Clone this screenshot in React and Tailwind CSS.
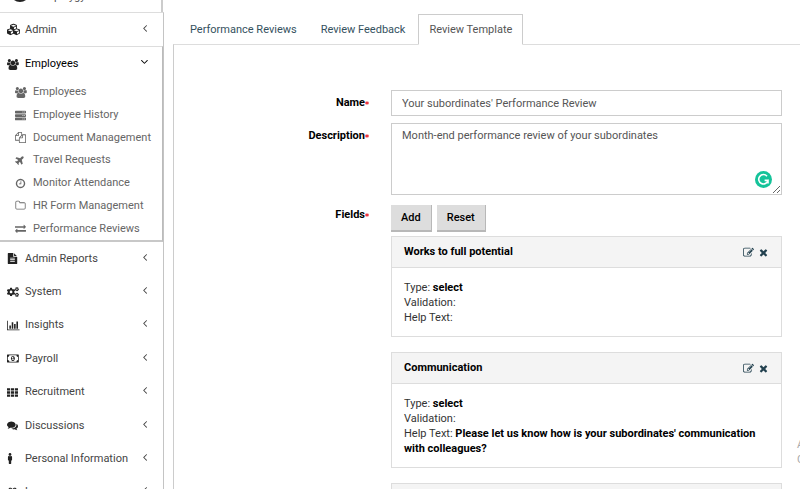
import { useState } from 'react'
import { FaAsterisk, FaCubes, FaServer, FaPlane, FaCogs, FaMale, FaGift } from 'react-icons/fa'

const paths = {
  users: [1920, 'M593 896q-162 5-265 128h-134q-82 0-138-40.5t-56-118.5q0-353 124-353 6 0 43.5 21t97.5 42.5 119 21.5q67 0 133-23-5 37-5 66 0 159 93 287zm1071 637q0 120-73 189.5t-194 69.5h-874q-121 0-194-69.5t-73-189.5q0-53 3.5-103.5t14-109 26.5-108.5 43-97.5 62-81 85.5-53.5 111.5-20q10 0 43 21.5t73 48 107 48 135 21.5 135-21.5 107-48 73-48 43-21.5q61 0 111.5 20t85.5 53.5 62 81 43 97.5 26.5 108.5 14 109 3.5 103.5zm-1024-1277q0 106-75 181t-181 75-181-75-75-181 75-181 181-75 181 75 75 181zm704 384q0 159-112.5 271.5t-271.5 112.5-271.5-112.5-112.5-271.5 112.5-271.5 271.5-112.5 271.5 112.5 112.5 271.5zm576 225q0 78-56 118.5t-138 40.5h-134q-103-123-265-128 93-128 93-287 0-29-5-66 66 23 133 23 59 0 119-21.5t97.5-42.5 43.5-21q124 0 124 353zm-128-609q0 106-75 181t-181 75-181-75-75-181 75-181 181-75 181 75 75 181z'],
  files: [1792, 'M1696 384q40 0 68 28t28 68v1216q0 40-28 68t-68 28h-960q-40 0-68-28t-28-68v-288h-544q-40 0-68-28t-28-68v-672q0-40 20-88t48-76l408-408q28-28 76-48t88-20h416q40 0 68 28t28 68v328q68-40 128-40h416zm-544 213l-299 299h299v-299zm-640-384l-299 299h299v-299zm196 647l316-316v-416h-384v416q0 40-28 68t-68 28h-416v640h512v-256q0-40 20-88t48-76zm956 804v-1152h-384v416q0 40-28 68t-68 28h-416v640h896z'],
  clock: [1792, 'M1024 544v448q0 14-9 23t-23 9h-320q-14 0-23-9t-9-23v-64q0-14 9-23t23-9h224v-352q0-14 9-23t23-9h64q14 0 23 9t9 23zm416 352q0-148-73-273t-198-198-273-73-273 73-198 198-73 273 73 273 198 198 273 73 273-73 198-198 73-273zm224 0q0 209-103 385.5t-279.5 279.5-385.5 103-385.5-103-279.5-279.5-103-385.5 103-385.5 279.5-279.5 385.5-103 385.5 103 279.5 279.5 103 385.5z'],
  folder: [1792, 'M1600 1312v-704q0-40-28-68t-68-28h-704q-40 0-68-28t-28-68v-64q0-40-28-68t-68-28h-320q-40 0-68 28t-28 68v960q0 40 28 68t68 28h1216q40 0 68-28t28-68zm128-704v704q0 92-66 158t-158 66h-1216q-92 0-158-66t-66-158v-960q0-92 66-158t158-66h320q92 0 158 66t66 158v32h672q92 0 158 66t66 158z'],
  exchange: [1792, 'M1792 1184v192q0 13-9.5 22.5t-22.5 9.5h-1376v192q0 13-9.5 22.5t-22.5 9.5q-12 0-24-10l-319-320q-9-9-9-22 0-14 9-23l320-320q9-9 23-9 13 0 22.5 9.5t9.5 22.5v192h1376q13 0 22.5 9.5t9.5 22.5zm0-544q0 14-9 23l-320 320q-9 9-23 9-13 0-22.5-9.5t-9.5-22.5v-192h-1376q-13 0-22.5-9.5t-9.5-22.5v-192q0-13 9.5-22.5t22.5-9.5h1376v-192q0-14 9-23t23-9q12 0 24 10l319 319q9 9 9 23z'],
  report: [1792, 'M1596 476q14 14 28 36h-472v-472q22 14 36 28zm-476 164h544v1056q0 40-28 68t-68 28h-1344q-40 0-68-28t-28-68v-1600q0-40 28-68t68-28h800v544q0 40 28 68t68 28zm160 736v-64q0-14-9-23t-23-9h-704q-14 0-23 9t-9 23v64q0 14 9 23t23 9h704q14 0 23-9t9-23zm0-256v-64q0-14-9-23t-23-9h-704q-14 0-23 9t-9 23v64q0 14 9 23t23 9h704q14 0 23-9t9-23zm0-256v-64q0-14-9-23t-23-9h-704q-14 0-23 9t-9 23v64q0 14 9 23t23 9h704q14 0 23-9t9-23z'],
  chart: [2048, 'M640 896v512h-256v-512h256zm384-512v1024h-256v-1024h256zm1024 1152v128h-2048v-1536h128v1408h1920zm-640-896v768h-256v-768h256zm384-384v1152h-256v-1152h256z'],
  money: [1920, 'M768 1152h384v-96h-128v-448h-114l-148 137 77 80q42-37 55-57h2v288h-128v96zm512-256q0 70-21 142t-59.5 134-101.5 101-138 39-138-39-101.5-101-59.5-134-21-142 21-142 59.5-134 101.5-101 138-39 138 39 101.5 101 59.5 134 21 142zm512 256v-512q-106 0-181-75t-75-181h-1152q0 106-75 181t-181 75v512q106 0 181 75t75 181h1152q0-106 75-181t181-75zm128-832v1152q0 26-19 45t-45 19h-1792q-26 0-45-19t-19-45v-1152q0-26 19-45t45-19h1792q26 0 45 19t19 45z'],
  grid: [1792, 'M0 192h512v384h-512zM640 192h512v384h-512zM1280 192h512v384h-512zM0 704h512v384h-512zM640 704h512v384h-512zM1280 704h512v384h-512zM0 1216h512v384h-512zM640 1216h512v384h-512zM1280 1216h512v384h-512z'],
  comments: [1792, 'M1408 768q0 139-94 257t-256.5 186.5-353.5 68.5q-86 0-176-16-124 88-278 128-36 9-86 16h-3q-11 0-20.5-8t-11.5-21q-1-3-1-6.5t.5-6.5 2-6l2.5-5 3.5-5.5 4-5 4.5-5 4-4.5q5-6 23-25t26-29.5 22.5-29 25-38.5 20.5-44q-124-72-195-177t-71-224q0-139 94-257t256.5-186.5 353.5-68.5 353.5 68.5 256.5 186.5 94 257zm384 256q0 120-71 224.5t-195 176.5q10 24 20.5 44t25 38.5 22.5 29 26 29.5 23 25q1 1 4 4.5t4.5 5 4 5 3.5 5.5l2.5 5 2 6 .5 6.5-1 6.5q-3 14-13 22t-22 7q-50-7-86-16-154-40-278-128-90 16-176 16-271 0-472-132 58 4 88 4 161 0 309-45t264-129q125-92 192-212t67-254q0-77-23-152 129 71 204 178t75 230z'],
  edit: [1792, 'M888 1184l116-116-152-152-116 116v56h96v96h56zm440-720q-16-16-33 1l-350 350q-17 17-1 33t33-1l350-350q17-17 1-33zm80 594v190q0 119-84.5 203.5t-203.5 84.5h-832q-119 0-203.5-84.5t-84.5-203.5v-832q0-119 84.5-203.5t203.5-84.5h832q63 0 117 25 15 7 18 23 3 17-9 29l-49 49q-14 14-32 8-23-6-45-6h-832q-66 0-113 47t-47 113v832q0 66 47 113t113 47h832q66 0 113-47t47-113v-126q0-13 9-22l64-64q15-15 35-7t20 29zm-96-738l288 288-672 672h-288v-288zm444 132l-92 92-288-288 92-92q28-28 68-28t68 28l152 152q28 28 28 68t-28 68z'],
  times: [1792, 'M1490 1322q0 40-28 68l-136 136q-28 28-68 28t-68-28l-294-294-294 294q-28 28-68 28t-68-28l-136-136q-28-28-28-68t28-68l294-294-294-294q-28-28-28-68t28-68l136-136q28-28 68-28t68 28l294 294 294-294q28-28 68-28t68 28l136 136q28 28 28 68t-28 68l-294 294 294 294q28 28 28 68z'],
  angle: [1792, 'M1203 544q0 13-10 23l-393 393 393 393q10 10 10 23t-10 23l-50 50q-10 10-23 10t-23-10l-466-466q-10-10-10-23t10-23l466-466q10-10 23-10t23 10l50 50q10 10 10 23z']
}

function Icon({ name, className = 'h-3' }) {
  const [width, d] = paths[name]
  return (
    <svg viewBox={`0 0 ${width} 1792`} fill="currentColor" className={className} aria-hidden="true">
      <path d={d} />
    </svg>
  )
}

const employeeLinks = [
  { label: 'Employees', icon: <Icon name="users" className="h-[11px]" /> },
  { label: 'Employee History', icon: <FaServer className="size-[11px]" /> },
  { label: 'Document Management', icon: <Icon name="files" className="h-[11px]" /> },
  { label: 'Travel Requests', icon: <FaPlane className="size-[10px] -rotate-45" /> },
  { label: 'Monitor Attendance', icon: <Icon name="clock" className="h-[11px]" /> },
  { label: 'HR Form Management', icon: <Icon name="folder" className="h-[11px]" /> },
  { label: 'Performance Reviews', icon: <Icon name="exchange" className="h-[11px]" /> }
]

const sections = [
  { label: 'Admin Reports', icon: <Icon name="report" className="h-[11px]" /> },
  { label: 'System', icon: <FaCogs className="size-3" /> },
  { label: 'Insights', icon: <Icon name="chart" className="h-[11px]" /> },
  { label: 'Payroll', icon: <Icon name="money" className="h-[11px]" /> },
  { label: 'Recruitment', icon: <Icon name="grid" className="h-[11px]" /> },
  { label: 'Discussions', icon: <Icon name="comments" className="h-[11px]" /> },
  { label: 'Personal Information', icon: <FaMale className="h-[11px] w-[6px]" /> },
  { label: 'Leave', icon: <FaGift className="size-[11px]" /> }
]

const tabs = ['Performance Reviews', 'Review Feedback', 'Review Template']

const fields = [
  { title: 'Works to full potential', type: 'select', help: '' },
  {
    title: 'Communication',
    type: 'select',
    help: "Please let us know how is your subordinates' communication with colleagues?"
  }
]

function SectionButton({ label, icon, open, onClick }) {
  return (
    <button
      type="button"
      onClick={onClick}
      className={`flex h-full min-h-[33px] w-full items-center pl-[7px] pr-3 text-left ${open ? 'text-black' : 'text-[#444]'}`}
    >
      <span className="flex w-[18px] shrink-0 text-[#222]">{icon}</span>
      <span className="flex-1 whitespace-nowrap">{label}</span>
      <Icon name="angle" className={`mb-1 h-3 ${open ? '-rotate-90' : ''}`} />
    </button>
  )
}

function Sidebar() {
  const [open, setOpen] = useState(true)

  return (
    <aside className="w-[164px] shrink-0">
      <div className="mr-px flex h-3 items-end gap-2 overflow-hidden border-r-2 border-[#ccc] pl-[10px]">
        <span className="mb-[10px] size-5 shrink-0 rounded-full bg-[#222]" />
        <span className="mb-[7px] text-[#555]">Employgy</span>
      </div>
      <nav className="border-r border-t border-r-[#c4c4c4] border-t-[#ddd]">
        <SectionButton label="Admin" icon={<FaCubes className="size-[13px]" />} />
        <div className="border-b-2 border-r border-t border-b-[#c8c8c8] border-r-[#bbb] border-t-[#ddd]">
          <div className="h-[34px]">
            <SectionButton
              label="Employees"
              icon={<Icon name="users" className="h-[11px]" />}
              open={open}
              onClick={() => setOpen(!open)}
            />
          </div>
          {open && (
            <ul className="grid h-[159px] auto-rows-fr">
              {employeeLinks.map(link => (
                <li key={link.label} className="flex">
                  <a href="#" className="flex flex-1 items-center whitespace-nowrap pl-[15px] text-[#666]">
                    <span className="flex w-[18px] shrink-0">{link.icon}</span>
                    {link.label}
                  </a>
                </li>
              ))}
            </ul>
          )}
        </div>
        <ul className="grid h-[267px] auto-rows-fr">
          {sections.map(section => (
            <li key={section.label}>
              <SectionButton {...section} />
            </li>
          ))}
        </ul>
      </nav>
    </aside>
  )
}

function FormRow({ label, htmlFor, children }) {
  return (
    <div className="flex gap-[22px]">
      <label htmlFor={htmlFor} className="flex h-[26px] w-[195px] shrink-0 items-center justify-end font-bold text-black">
        {label}
        <FaAsterisk className="size-1 text-red-600" />
      </label>
      <div className="min-w-0 flex-1">{children}</div>
    </div>
  )
}

function FieldCard({ title, children }) {
  return (
    <section className="border border-[#ddd]">
      <header className="flex h-[31px] items-center gap-1 border-b border-[#ddd] bg-[#f4f4f4] px-3">
        <h3 className="flex-1 font-bold text-black">{title}</h3>
        <button type="button" aria-label="Edit" className="text-[#23414f]">
          <Icon name="edit" className="h-[11px]" />
        </button>
        <button type="button" aria-label="Remove" className="text-[#23414f]">
          <Icon name="times" className="h-[11px]" />
        </button>
      </header>
      <div className="px-3 pb-[11px] pt-3 leading-[15px] text-[#333]">{children}</div>
    </section>
  )
}

function ReviewForm() {
  return (
    <form className="flex flex-col gap-[7px] pr-[18px] pt-[45px]">
      <FormRow label="Name" htmlFor="name">
        <input
          id="name"
          defaultValue="Your subordinates' Performance Review"
          className="block h-[26px] w-full border border-[#ccc] px-[10px] text-[#555]"
        />
      </FormRow>
      <FormRow label="Description" htmlFor="description">
        <div className="relative">
          <textarea
            id="description"
            defaultValue="Month-end performance review of your subordinates"
            className="block h-[72px] w-full resize border border-[#ccc] px-[10px] py-1 leading-4 text-[#555]"
          />
          <svg viewBox="0 0 17 17" className="absolute bottom-[7px] right-[10px] size-[17px]" aria-hidden="true">
            <circle cx="8.5" cy="8.5" r="8.5" fill="#15c39a" />
            <path d="M12 5.2A4.7 4.7 0 1 0 13 9.4H9.6M13 9.2v3.4" fill="none" stroke="#fff" strokeWidth="1.6" />
          </svg>
        </div>
      </FormRow>
      <FormRow label="Fields" htmlFor="add-field">
        <div className="flex gap-[5px] pb-1 pt-[3px]">
          <button id="add-field" type="button" className="h-[27px] border-b-2 border-r border-[#b8b8b8] bg-[#ddd] px-[10px] font-medium text-black">
            Add
          </button>
          <button type="reset" className="h-[27px] border-b-2 border-r border-[#b8b8b8] bg-[#ddd] px-[10px] font-medium text-black">
            Reset
          </button>
        </div>
        <div className="space-y-[15px]">
          {fields.map(field => (
            <FieldCard key={field.title} title={field.title}>
              <p>Type: <b className="text-black">{field.type}</b></p>
              <p>Validation:</p>
              <p>Help Text: {field.help && <b className="text-black">{field.help}</b>}</p>
            </FieldCard>
          ))}
          <FieldCard />
        </div>
      </FormRow>
    </form>
  )
}

export default function App() {
  const [active, setActive] = useState('Review Template')

  return (
    <div className="relative flex h-screen overflow-hidden bg-white font-['Roboto',sans-serif] text-[11px] leading-4">
      <Sidebar />
      <main className="min-w-0 flex-1 pl-[9px] pt-[14px]">
        <div className="flex gap-[2px] pl-[6px]" role="tablist">
          {tabs.map(tab => (
            <button
              key={tab}
              type="button"
              role="tab"
              aria-selected={tab === active}
              onClick={() => setActive(tab)}
              className={`-mb-px h-[31px] border px-[10px] ${tab === active ? 'border-[#ccc] border-b-white bg-white text-[#555]' : 'border-transparent text-[#34515e]'}`}
            >
              {tab}
            </button>
          ))}
        </div>
        <div className="border-l border-t border-l-[#ccc] border-t-[#ddd]">
          <ReviewForm />
        </div>
      </main>
      <div className="absolute bottom-[22px] left-full -ml-[3px] whitespace-nowrap leading-[15px] text-[#aaa]">
        <p>Activate Windows</p>
        <p>Go to Settings</p>
      </div>
    </div>
  )
}
